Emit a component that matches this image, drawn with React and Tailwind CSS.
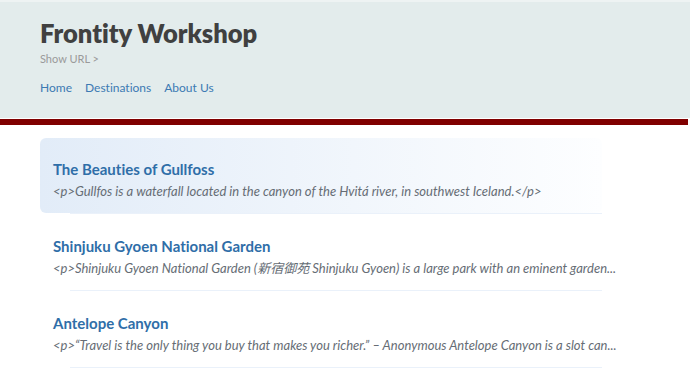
const posts = [
  {
    title: 'The Beauties of Gullfoss',
    excerpt: '<p>Gullfos is a waterfall located in the canyon of the Hvitá river, in southwest Iceland.</p>',
    active: true,
  },
  {
    title: 'Shinjuku Gyoen National Garden',
    excerpt: '<p>Shinjuku Gyoen National Garden (新宿御苑 Shinjuku Gyoen) is a large park with an eminent garden...',
  },
  {
    title: 'Antelope Canyon',
    excerpt: '<p>“Travel is the only thing you buy that makes you richer.” – Anonymous Antelope Canyon is a slot can...',
  },
]

function PostItem({ post }) {
  return (
    <li className="w-[562px]">
      <div
        className={`rounded-md px-[13px] pt-[20px] pb-[11px] ${post.active ? 'bg-gradient-to-r from-[#e2ecf8] to-[#fdfeff]' : ''}`}
      >
        <h2 className="text-[15px] font-bold leading-[22px] text-[#2f6ea8]">{post.title}</h2>
        <p className="whitespace-nowrap text-[13px] italic leading-[22px] text-[#666d75]">{post.excerpt}</p>
      </div>
      <div className="ml-[30px] h-px bg-[#eaf1fa]" />
    </li>
  )
}

export default function App() {
  return (
    <div className="min-h-[387px] w-[690px] bg-white font-['Lato','Noto_Sans_CJK_JP',sans-serif] [font-variant-ligatures:none]">
      <header className="border-t-2 border-[#eef3f3] bg-[#e3ecec]">
        <div className="px-10 pt-[14px] pb-[21px]">
          <h1 className="text-[25.5px] font-extrabold leading-[34px] text-[#404040]">Frontity Workshop</h1>
          <div className="mt-[2px] text-[11px] leading-[14px] text-[#9a9a9a]">Show URL &gt;</div>
          <nav className="mt-[13px] flex gap-[13px] text-[12px] leading-[18px] text-[#3c7ab3]">
            <a>Home</a>
            <a>Destinations</a>
            <a>About Us</a>
          </nav>
        </div>
      </header>
      <div className="w-[688px] border-t border-white">
        <div className="h-[6px] bg-[#800000]" />
      </div>
      <main className="px-10 pt-[13px]">
        <ul className="flex flex-col gap-[1px]">
          {posts.map((post) => (
            <PostItem key={post.title} post={post} />
          ))}
        </ul>
      </main>
    </div>
  )
}
